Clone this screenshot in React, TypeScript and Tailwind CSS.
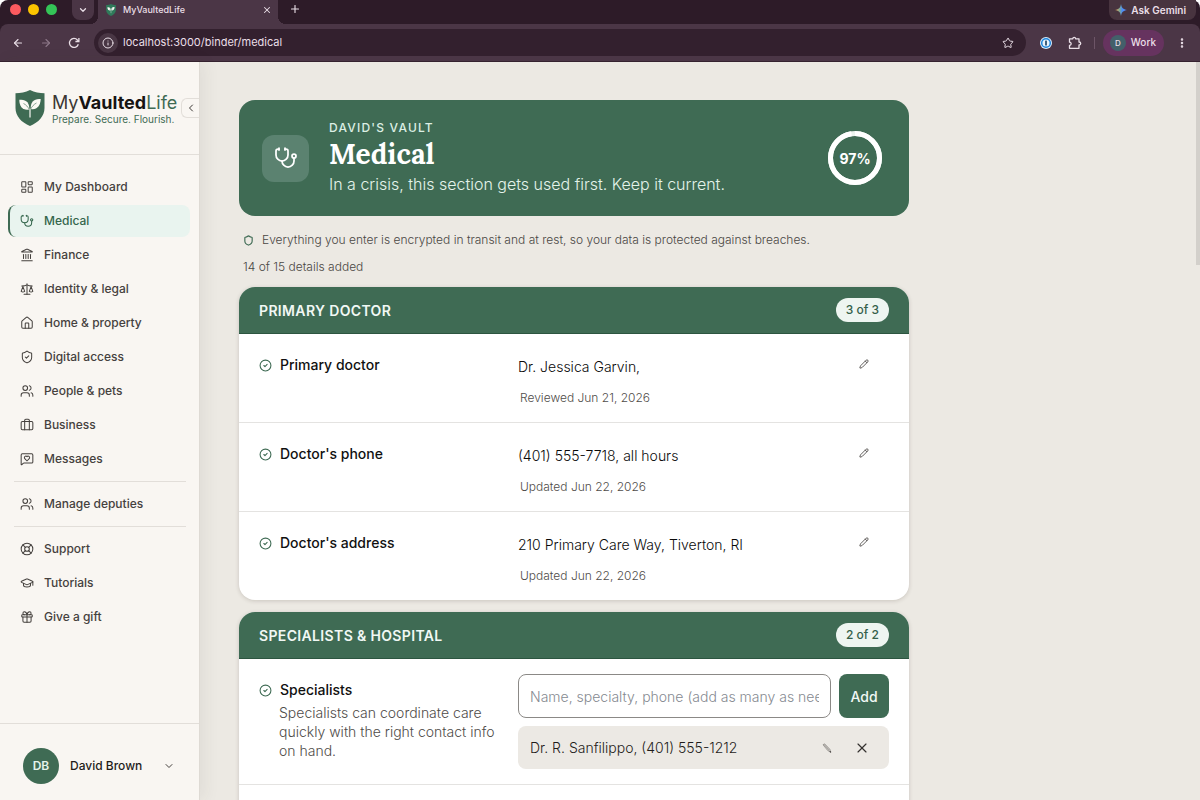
import { useState } from 'react'
import {
  ArrowLeft,
  ArrowRight,
  Briefcase,
  ChevronDown,
  ChevronLeft,
  CircleCheck,
  EllipsisVertical,
  Gift,
  GraduationCap,
  House,
  Info,
  Landmark,
  LayoutDashboard,
  LifeBuoy,
  MessageSquareHeart,
  Pencil,
  Plus,
  Scale,
  Shield,
  ShieldCheck,
  Star,
  Stethoscope,
  Users,
  X,
  type LucideIcon
} from 'lucide-react'

interface NavItem {
  label: string
  icon: LucideIcon
}

const NAV_GROUPS: NavItem[][] = [
  [
    { label: 'My Dashboard', icon: LayoutDashboard },
    { label: 'Medical', icon: Stethoscope },
    { label: 'Finance', icon: Landmark },
    { label: 'Identity & legal', icon: Scale },
    { label: 'Home & property', icon: House },
    { label: 'Digital access', icon: ShieldCheck },
    { label: 'People & pets', icon: Users },
    { label: 'Business', icon: Briefcase },
    { label: 'Messages', icon: MessageSquareHeart }
  ],
  [{ label: 'Manage deputies', icon: Users }],
  [
    { label: 'Support', icon: LifeBuoy },
    { label: 'Tutorials', icon: GraduationCap },
    { label: 'Give a gift', icon: Gift }
  ]
]

const DOCTOR_ROWS = [
  { label: 'Primary doctor', value: 'Dr. Jessica Garvin,', note: 'Reviewed Jun 21, 2026' },
  { label: "Doctor's phone", value: '(401) 555-7718, all hours', note: 'Updated Jun 22, 2026' },
  { label: "Doctor's address", value: '210 Primary Care Way, Tiverton, RI', note: 'Updated Jun 22, 2026' }
]

function ShieldLogo({ className, fill }: { className: string; fill: string }) {
  return (
    <svg className={className} viewBox="0 0 30 36" aria-hidden="true">
      <path d="M15 0C10.5 2.400 5.500 3.200 0.500 3.200V18C0.500 26 6.500 32.500 15 36C23.500 32.500 29.500 26 29.500 18V3.200C24.500 3.200 19.500 2.400 15 0Z" fill={fill} />
      <path d="M14.200 19.500C8.500 20.800 4.300 17.500 4.300 9.800C10.500 8.800 14.800 12.300 14.200 19.500Z" fill="#fbf9f5" />
      <path d="M15.800 19C21.500 20.300 25.500 16 25.700 9C19.500 8.200 15.200 11.800 15.800 19Z" fill="#fbf9f5" />
      <path d="M8.500 13.500C11 14.700 13 16.800 14.600 20M21.500 13C19 14.200 17 16.400 15.400 19.500" fill="none" stroke={fill} strokeWidth="0.6" />
      <path d="M15 18.500V27.500" stroke="#fbf9f5" strokeWidth="1.200" />
    </svg>
  )
}

function BrowserChrome() {
  return (
    <header className="shrink-0 bg-[#2d1b28] rounded-t-lg text-[#eadfe7]">
      {/* Tab strip */}
      <div className="flex h-6 items-start">
        <div className="flex items-center gap-[7px] pl-[10px] pt-1">
          <span className="size-[11px] rounded-full bg-[#fc5a5f]" />
          <span className="size-[11px] rounded-full bg-[#fcc400]" />
          <span className="size-[11px] rounded-full bg-[#34c457]" />
        </div>
        <button aria-label="Search tabs" className="ml-[15px] flex h-5 w-[22px] items-center justify-center rounded-b-lg bg-[#4a3545]">
          <ChevronDown className="size-[10px]" strokeWidth={3} />
        </button>
        <div className="flex h-6 items-end">
          <span className="ml-[-4px] size-2 bg-[radial-gradient(circle_at_0_0,transparent_8px,#4b3646_8px)]" />
          <div className="flex h-6 w-[180px] items-center gap-[7px] bg-[#4b3646] pb-[5px] pl-2 pr-[6px]">
            <ShieldLogo className="h-3 w-[10px]" fill="#2f7a5a" />
            <span className="flex-1 text-[9px] font-medium">MyVaultedLife</span>
            <button aria-label="Close tab">
              <X className="size-[10px]" strokeWidth={2.5} />
            </button>
          </div>
          <span className="size-2 bg-[radial-gradient(circle_at_100%_0,transparent_8px,#4b3646_8px)]" />
        </div>
        <button aria-label="New tab" className="ml-[3px] mt-[3px]">
          <Plus className="size-3" strokeWidth={2.25} />
        </button>
        <button className="ml-auto mr-1 flex h-5 items-center gap-1 rounded-b-lg bg-[#48343f] pl-1.5 pr-[10px] text-[10px] font-semibold">
          <svg className="size-3" viewBox="0 0 12 12" aria-hidden="true">
            <defs>
              <linearGradient id="gemini" x1="0" y1="0" x2="1" y2="0">
                <stop offset="0" stopColor="#f0a14a" />
                <stop offset="0.4" stopColor="#7aa79a" />
                <stop offset="0.6" stopColor="#4b8df5" />
                <stop offset="1" stopColor="#5a8dfa" />
              </linearGradient>
            </defs>
            <path d="M6 0C6.600 3.800 8.200 5.400 12 6C8.200 6.600 6.600 8.200 6 12C5.400 8.200 3.800 6.600 0 6C3.800 5.400 5.400 3.800 6 0Z" fill="url(#gemini)" />
          </svg>
          Ask Gemini
        </button>
      </div>

      {/* Toolbar */}
      <div className="flex h-[38px] items-center rounded-t-lg border-b border-[#35222f] bg-[#4b3646] pl-3 pr-3">
        <div className="flex items-center gap-4">
          <button aria-label="Back"><ArrowLeft className="size-3" strokeWidth={2.25} /></button>
          <button aria-label="Forward" className="text-[#8d7788]"><ArrowRight className="size-3" strokeWidth={2.25} /></button>
          <button aria-label="Reload">
            <svg className="size-3" viewBox="0 0 12 12" fill="none" stroke="currentColor" strokeWidth="1.300" aria-hidden="true">
              <path d="M10.300 7.200A4.500 4.500 0 1 1 9.400 3L10.700 4.300" />
              <path d="M10.900 1V4.500H7.400" />
            </svg>
          </button>
        </div>
        <div className="ml-[14px] flex h-[27px] flex-1 items-center rounded-full bg-[#33202e] pl-1 pr-3">
          <span className="flex size-5 items-center justify-center rounded-full bg-[#493644]">
            <Info className="size-3" strokeWidth={2} />
          </span>
          <input
            aria-label="Address"
            defaultValue="localhost:3000/binder/medical"
            className="ml-[5px] min-w-0 flex-1 bg-transparent text-[11px] outline-none"
          />
          <button aria-label="Bookmark"><Star className="size-3" strokeWidth={2} /></button>
        </div>
        <button aria-label="Password manager" className="ml-[14px]">
          <svg className="size-3" viewBox="0 0 12 12" aria-hidden="true">
            <circle cx="6" cy="6" r="6" fill="#d9ecfb" />
            <circle cx="6" cy="6" r="4.300" fill="#e8f3fc" stroke="#1c84dc" strokeWidth="1.500" />
            <rect x="5.200" y="3.500" width="1.600" height="5" rx="0.500" fill="#123a5c" />
          </svg>
        </button>
        <button aria-label="Extensions" className="ml-4">
          <svg className="size-[14px]" viewBox="0 0 14 14" fill="none" stroke="currentColor" strokeWidth="1.300" strokeLinejoin="round" aria-hidden="true">
            <path d="M1.500 2.800H4.800C4.800 0.800 7.600 0.800 7.600 2.800H11V6C13.300 6 13.300 9 11 9V12.300H1.500V9.300C3.700 9.300 3.700 6.200 1.500 6.200Z" />
          </svg>
        </button>
        <span className="ml-3 mr-2 h-3 w-px bg-[#6d5567]" />
        <button className="flex h-[26px] items-center gap-[5px] rounded-full bg-[#66335f] pl-[7px] pr-2 text-[10px] font-medium">
          <span className="flex size-4 items-center justify-center rounded-full bg-[#43606a] text-[8px]">D</span>
          Work
        </button>
        <button aria-label="Browser menu" className="ml-3"><EllipsisVertical className="size-3" strokeWidth={3} /></button>
      </div>
    </header>
  )
}

function Sidebar() {
  const [active, setActive] = useState('Medical')

  return (
    <aside className="relative z-10 flex w-[200px] shrink-0 flex-col border-r border-[#dedad4] bg-[#f9f6f2] shadow-[4px_0_16px_rgba(60,50,40,0.07)]">
      <div className="flex h-[93px] shrink-0 items-center border-b border-[#e2ded9] pl-[15px]">
        <ShieldLogo className="h-9 w-[30px] shrink-0" fill="#3f6b54" />
        <div className="ml-[7px] whitespace-nowrap pt-0.5">
          <div className="text-[18px] leading-5 text-[#3b3734]">
            My
            <span className="font-bold text-[#161413]">Vaulted</span>
            <span className="text-[#3f6b54]">Life</span>
          </div>
          <div className="text-[10px] leading-3 text-[#3f6b54]">Prepare. Secure. Flourish.</div>
        </div>
      </div>
      <button
        aria-label="Collapse sidebar"
        className="absolute right-0 top-9 flex h-5 w-[18px] items-center justify-center rounded-l-md border border-r-0 border-[#e2ded9] bg-[#f9f6f2] text-[#3b3734]"
      >
        <ChevronLeft className="size-3" strokeWidth={2} />
      </button>

      <nav className="flex flex-1 flex-col gap-0.5 pl-2 pr-[9px] pt-4">
        {NAV_GROUPS.map((group, i) => (
          <div key={group[0].label} className="flex flex-col gap-0.5">
            {i > 0 && <hr className="my-1 ml-1.5 mr-1 border-[#e2ded9]" />}
            {group.map(({ label, icon: Icon }) => (
              <a
                key={label}
                href="#"
                onClick={() => setActive(label)}
                className={`flex h-8 items-center gap-[10px] rounded-lg border-l-2 pl-[10px] text-[12px] font-medium ${
                  label === active
                    ? 'border-[#3f6b54] bg-[#e9f4ef] text-[#34664c]'
                    : 'border-transparent text-[#45413e]'
                }`}
              >
                <Icon className="size-[14px]" strokeWidth={1.75} />
                {label}
              </a>
            ))}
          </div>
        ))}
      </nav>

      <button className="flex items-center border-t border-[#e2ded9] pb-4 pl-[23px] pr-6 pt-6 text-[12px] font-medium text-[#1f1c1a]">
        <span className="flex size-9 items-center justify-center rounded-full bg-[#3f6b54] font-semibold text-[#e4f3ea]">
          DB
        </span>
        <span className="ml-[11px] flex-1 text-left">David Brown</span>
        <ChevronDown className="size-3 text-[#45413e]" strokeWidth={2} />
      </button>
    </aside>
  )
}

function Hero({ percent }: { percent: number }) {
  const length = 2 * Math.PI * 24.5

  return (
    <section className="flex items-center rounded-2xl bg-[#3f6b54] py-5 pl-[23px] pr-[27px] text-white">
      <div className="flex size-[47px] shrink-0 items-center justify-center rounded-xl bg-[#5b8270]">
        <Stethoscope className="size-6" strokeWidth={1.75} />
      </div>
      <div className="ml-5 flex-1">
        <p className="text-[12px] font-medium leading-4 tracking-widest text-[#dcefe4]">DAVID'S VAULT</p>
        <h1 className="font-['Lora','Liberation_Serif',serif] text-[28px] font-bold leading-9">Medical</h1>
        <p className="text-[16px] font-light leading-6 text-[#e4f3ea]">
          In a crisis, this section gets used first. Keep it current.
        </p>
      </div>
      <div className="relative flex size-[54px] items-center justify-center">
        <svg className="absolute inset-0 -rotate-90" viewBox="0 0 54 54" fill="none" strokeWidth="5" aria-hidden="true">
          <circle cx="27" cy="27" r="24.500" stroke="#ecf4ef" />
          <circle cx="27" cy="27" r="24.500" stroke="#ffffff" strokeDasharray={`${(length * percent) / 100} ${length}`} />
        </svg>
        <span className="text-[14px] font-bold">{percent}%</span>
      </div>
    </section>
  )
}

function CardHeader({ title, count }: { title: string; count: string }) {
  return (
    <div className="flex h-[47px] items-center justify-between border-b border-[#2c5540] bg-[#3f6b54] px-5">
      <h2 className="text-[14px] font-semibold tracking-wide text-[#f1f8f4]">{title}</h2>
      <span className="rounded-full bg-[#eef5f1] px-[10px] py-0.5 text-[12px] font-medium leading-5 text-[#34604a]">{count}</span>
    </div>
  )
}

function RowLabel({ label, htmlFor }: { label: string; htmlFor?: string }) {
  const Tag = htmlFor ? 'label' : 'h3'
  return (
    <div className="flex items-center gap-2">
      <CircleCheck className="size-[13px] text-[#3f6b54]" strokeWidth={2} />
      <Tag htmlFor={htmlFor} className="text-[14px] font-medium leading-5 text-[#111111]">
        {label}
      </Tag>
    </div>
  )
}

export default function App() {
  const [specialist, setSpecialist] = useState('')

  return (
    <div className="flex h-screen flex-col overflow-hidden bg-white font-['Inter',sans-serif]">
      <BrowserChrome />
      <div className="flex min-h-0 flex-1">
        <Sidebar />

        <main className="relative min-w-0 flex-1 overflow-hidden bg-[#ece9e3] pl-[39px] pr-6 pt-[38px]">
          {/* Scroll thumb */}
          <div className="absolute right-0 top-0 h-[203px] w-1 bg-[#d3d0cb]" />

          <div className="max-w-[670px]">
            <Hero percent={97} />

            <div className="pl-1 text-[12px] font-light text-[#4a4744]">
              <p className="mt-[14px] flex items-center gap-2 leading-5">
                <Shield className="size-[11px] text-[#3f6b54]" strokeWidth={2.5} />
                Everything you enter is encrypted in transit and at rest, so your data is protected against breaches.
              </p>
              <p className="mt-[7px] leading-5">14 of 15 details added</p>
            </div>

            <section className="mt-[10px] overflow-hidden rounded-2xl bg-white shadow-[0_1px_4px_rgba(50,40,30,0.18)]">
              <CardHeader title="PRIMARY DOCTOR" count="3 of 3" />
              <div className="divide-y divide-[#e4e3e1]">
                {DOCTOR_ROWS.map((row) => (
                  <div key={row.label} className="grid grid-cols-[243px_1fr_auto] items-start gap-x-4 pb-3 pl-5 pr-10 pt-[21px]">
                    <RowLabel label={row.label} />
                    <div>
                      <p className="pt-0.5 text-[14px] font-light leading-5 text-[#0a0a0a]">{row.value}</p>
                      <p className="mt-[9px] pl-0.5 text-[12px] font-light leading-6 text-[#4f4c49]">{row.note}</p>
                    </div>
                    <button aria-label={`Edit ${row.label}`} className="pt-1">
                      <Pencil className="size-[10px] text-[#45413e]" strokeWidth={2} />
                    </button>
                  </div>
                ))}
              </div>
            </section>

            <section className="mt-3 overflow-hidden rounded-2xl bg-white shadow-[0_1px_4px_rgba(50,40,30,0.18)]">
              <CardHeader title="SPECIALISTS & HOSPITAL" count="2 of 2" />
              <div className="grid grid-cols-[243px_1fr] gap-x-4 border-b border-[#e4e3e1] px-5 py-[15px]">
                <div className="pt-1.5">
                  <RowLabel label="Specialists" htmlFor="specialist" />
                  <p className="mt-[3px] pl-5 text-[14px] font-light leading-[19px] text-[#4f4c49]">
                    Specialists can coordinate care quickly with the right contact info on hand.
                  </p>
                </div>
                <div>
                  <form className="flex gap-2" onSubmit={(e) => e.preventDefault()}>
                    <input
                      id="specialist"
                      type="text"
                      value={specialist}
                      onChange={(e) => setSpecialist(e.target.value)}
                      placeholder="Name, specialty, phone (add as many as needed)"
                      className="h-11 min-w-0 flex-1 rounded-lg border border-[#8b8986] px-[11px] text-[14px] font-light placeholder:text-[#868a91]"
                    />
                    <button type="submit" className="h-11 w-[50px] rounded-lg bg-[#3f6b54] text-[14px] font-medium text-[#f1f8f4]">
                      Add
                    </button>
                  </form>
                  <div className="mt-2 flex h-[43px] items-center rounded-lg bg-[#ece9e4] pl-3 pr-[19px] text-[14px] text-[#34312f]">
                    <span className="flex-1 font-light text-[#1f1c1a]">Dr. R. Sanfilippo, (401) 555-1212</span>
                    <button aria-label="Edit specialist">
                      <svg className="size-[10px]" viewBox="0 0 10 10" aria-hidden="true">
                        <path d="M1 1.800L2.600 0.800L7.800 6.200L8.800 9.200L5.800 7.600Z" fill="#c9c6c1" stroke="#8a8783" strokeWidth="0.700" />
                        <path d="M1.800 1.300L6.800 6.900" stroke="#8a8783" strokeWidth="0.500" />
                        <path d="M7.800 8.300L8.900 9.300" stroke="#3b3734" strokeWidth="1.100" />
                      </svg>
                    </button>
                    <button aria-label="Remove specialist" className="ml-[22px]">
                      <X className="size-4" strokeWidth={1.75} />
                    </button>
                  </div>
                </div>
              </div>
              <div className="h-24" />
            </section>
          </div>
        </main>
      </div>
    </div>
  )
}
